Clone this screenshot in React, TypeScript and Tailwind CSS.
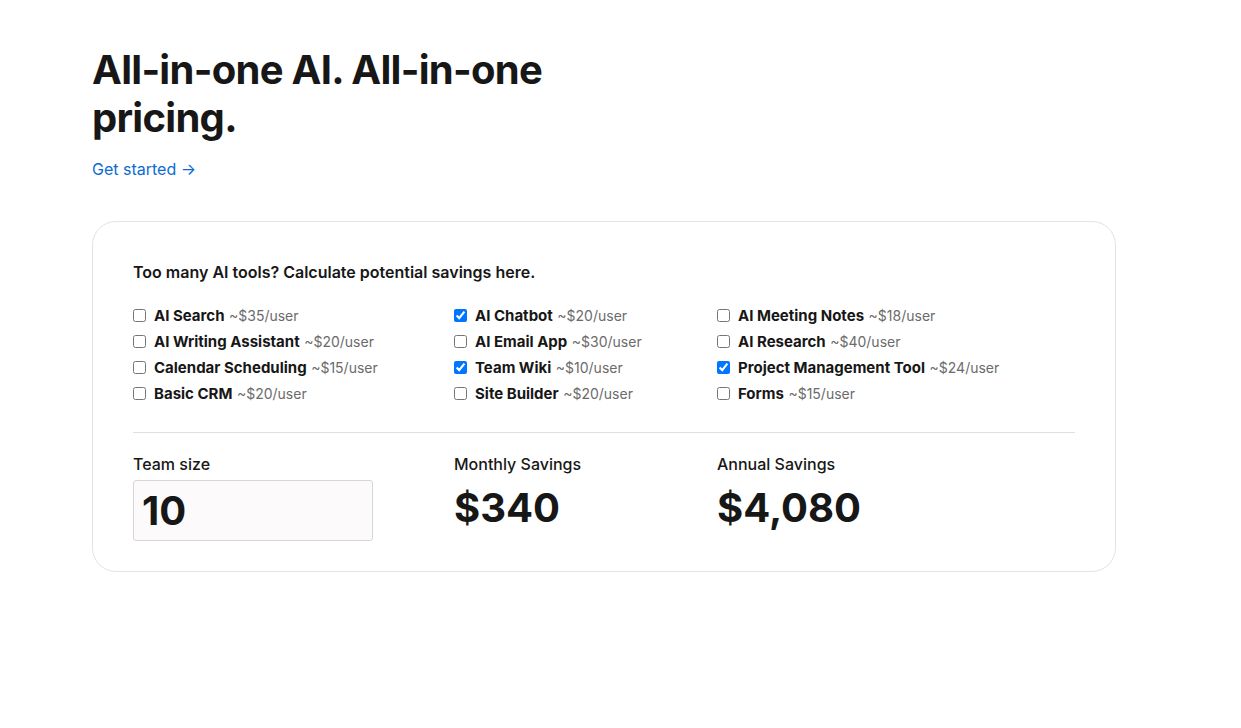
import React, { useState } from "react";

const tools = [
  [
    { name: "AI Search", price: 35, on: false },
    { name: "AI Writing Assistant", price: 20, on: false },
    { name: "Calendar Scheduling", price: 15, on: false },
    { name: "Basic CRM", price: 20, on: false },
  ],
  [
    { name: "AI Chatbot", price: 20, on: true },
    { name: "AI Email App", price: 30, on: false },
    { name: "Team Wiki", price: 10, on: true },
    { name: "Site Builder", price: 20, on: false },
  ],
  [
    { name: "AI Meeting Notes", price: 18, on: false },
    { name: "AI Research", price: 40, on: false },
    { name: "Project Management Tool", price: 24, on: true },
    { name: "Forms", price: 15, on: false },
  ],
];

const App: React.FC = () => {
  const [checked, setChecked] = useState<Record<string, boolean>>(() => {
    const init: Record<string, boolean> = {};
    tools.flat().forEach((t) => (init[t.name] = t.on));
    return init;
  });
  const [team, setTeam] = useState("10");

  // savings after the all-in-one plan (~$20/user)
  const perUser = tools
    .flat()
    .filter((t) => checked[t.name])
    .reduce((sum, t) => sum + t.price, 0);
  const size = parseInt(team) || 0;
  const monthly = Math.max(0, perUser - 20) * size;
  const annual = monthly * 12;

  return (
    <div
      className="min-h-screen bg-white text-[#171717] pl-[92px] pt-[46px]"
      style={{ fontFamily: "Inter, 'Noto Sans', sans-serif" }}
    >
      {/* Hero */}
      <h1 className="max-w-[540px] text-[40px] leading-[48px] font-bold tracking-[-0.018em]">
        All-in-one AI. All-in-one pricing.
      </h1>
      <a href="#" className="mt-[15px] inline-block text-[16px] leading-6 text-[#0b6bd3]">
        Get started →
      </a>

      {/* Calculator */}
      <div className="mt-10 w-[1024px] rounded-[24px] border border-[#e3e3e3] px-10 pt-[40px] pb-[30px]">
        <p className="text-[16px] leading-5 font-semibold">
          Too many AI tools? Calculate potential savings here.
        </p>

        <div className="mt-[20px] grid grid-cols-[321px_263px_1fr]">
          {tools.map((col, ci) => (
            <div key={ci} className="flex flex-col">
              {col.map((t) => (
                <label key={t.name} className="flex h-[26px] items-center gap-2">
                  <input
                    type="checkbox"
                    checked={checked[t.name]}
                    onChange={(e) =>
                      setChecked((p) => ({ ...p, [t.name]: e.target.checked }))
                    }
                    className="m-0 h-[13px] w-[13px]"
                  />
                  <span>
                    <span className="text-[15px] font-bold">{t.name}</span>{" "}
                    <span className="text-[14px] text-[#6b6b6b]">~${t.price}/user</span>
                  </span>
                </label>
              ))}
            </div>
          ))}
        </div>

        <div className="mt-[26px] border-t border-[#e0e0e0]" />

        <div className="mt-[21px] grid grid-cols-[321px_263px_1fr]">
          <div>
            <p className="text-[16px] leading-5 font-medium">Team size</p>
            <input
              value={team}
              onChange={(e) => setTeam(e.target.value)}
              className="mt-[6px] h-[61px] w-[240px] rounded-[3px] border border-[#d6d6d6] bg-[#fcfafa] px-2 text-[40px] font-bold text-[#171717] outline-none"
            />
          </div>
          <div>
            <p className="text-[16px] leading-5 font-medium">Monthly Savings</p>
            <p className="mt-[8px] text-[40px] leading-[52px] font-bold">
              ${monthly.toLocaleString("en-US")}
            </p>
          </div>
          <div>
            <p className="text-[16px] leading-5 font-medium">Annual Savings</p>
            <p className="mt-[8px] text-[40px] leading-[52px] font-bold">
              ${annual.toLocaleString("en-US")}
            </p>
          </div>
        </div>
      </div>
    </div>
  );
};

export default App;
